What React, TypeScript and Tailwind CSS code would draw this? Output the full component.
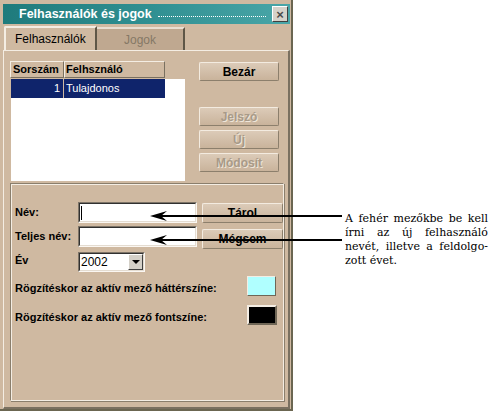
import React from "react";

const ui = "font-['Liberation_Sans',Arial,sans-serif]";

function Btn({ label, disabled, className = "" }: { label: string; disabled?: boolean; className?: string }) {
  return (
    <div
      className={`flex items-center justify-center rounded-[2px] border border-t-[#f3ebe0] border-l-[#f3ebe0] border-r-[#8c7f6c] border-b-[#8c7f6c] bg-gradient-to-b from-[#dccbb8] to-[#c9b39b] text-[12px] font-bold ${
        disabled ? "text-[#a89a88] [text-shadow:1px_1px_0_#efe6da]" : "text-black"
      } ${className}`}
    >
      {label}
    </div>
  );
}

function Sunken({ className = "", children }: { className?: string; children?: React.ReactNode }) {
  return (
    <div className={`border border-t-[#7d7468] border-l-[#7d7468] border-r-[#fbf7f2] border-b-[#fbf7f2] ${className}`}>
      <div className="h-full w-full border border-t-[#303030] border-l-[#303030] border-r-[#e4dcd1] border-b-[#e4dcd1] bg-white">
        {children}
      </div>
    </div>
  );
}

export default function App() {
  return (
    <div className={`relative flex h-[413px] w-[493px] bg-white ${ui}`}>
      {/* Window */}
      <div className="flex h-[411px] w-[293px] flex-col border-r-2 border-b-2 border-[#6b6651] bg-[#cfb9a1] pl-[3px] pt-[4px]">
        {/* Title bar */}
        <div className="flex h-[20px] w-[287px] items-center bg-gradient-to-r from-[#1f7b7c] via-[#2f8f91] to-[#49a6a8] pl-[16px] pr-[2px]">
          <span className="text-[12.5px] font-bold text-white">Felhasználók és jogok</span>
          <div className="mx-[6px] mt-[5px] flex-1 border-t border-dotted border-white" />
          <div className="flex h-[16px] w-[16px] items-center justify-center border border-t-white border-l-white border-r-[#404040] border-b-[#404040] bg-[#d6d2ca] text-[13px] font-bold leading-none text-[#4b4b4b]">
            ×
          </div>
        </div>

        {/* Tabs */}
        <div className="mt-[2px] flex h-[24px] pl-[1px]">
          <div className="flex w-[93px] items-center rounded-tl-[2px] border-t-2 border-l-2 border-r-2 border-t-[#f4ede3] border-l-[#f4ede3] border-r-[#5e5646] bg-[#cfb9a1] pl-[9px] text-[12px] text-black">
            Felhasználók
          </div>
          <div className="mt-[1px] flex w-[88px] items-center justify-center border-t-2 border-r-2 border-t-[#e9dfd2] border-r-[#5e5646] bg-[#bfa890] text-[12px] text-[#857866]">
            Jogok
          </div>
        </div>

        {/* Panel */}
        <div className="flex w-[287px] flex-1 flex-col border-t border-l border-r-2 border-b-2 border-t-[#f4ede3] border-l-[#f4ede3] border-r-[#7a7060] border-b-[#7a7060] pl-[6px] pt-[10px]">
          {/* Upper */}
          <div className="flex h-[122px]">
            <div className="flex w-[175px] flex-col">
              <div className="flex h-[17px] text-[11px] font-bold text-black">
                <div className="flex w-[54px] items-center border border-t-[#f4ede3] border-l-[#f4ede3] border-r-[#7a7060] border-b-[#7a7060] pl-[2px]">
                  Sorszám
                </div>
                <div className="flex w-[101px] items-center border border-t-[#f4ede3] border-l-[#f4ede3] border-r-[#7a7060] border-b-[#7a7060] pl-[1px]">
                  Felhsználó
                </div>
              </div>
              <div className="ml-[1px] mt-[1px] h-[102px] w-[174px] bg-white">
                <div className="flex h-[19px] w-[154px] bg-[#0f246b] text-[11px] text-white">
                  <div className="flex w-[53px] items-center justify-end border-r border-[#cfb9a1] pr-[3px]">1</div>
                  <div className="flex items-center pl-[2px]">Tulajdonos</div>
                </div>
              </div>
            </div>
            <div className="ml-[14px] flex flex-col">
              <Btn label="Bezár" className="mt-[1px] h-[19px] w-[80px]" />
              <Btn label="Jelszó" disabled className="mt-[26px] h-[19px] w-[80px]" />
              <Btn label="Új" disabled className="mt-[4px] h-[19px] w-[80px]" />
              <Btn label="Módosít" disabled className="mt-[4px] h-[19px] w-[80px]" />
            </div>
          </div>

          {/* Lower group */}
          <div className="mb-[6px] mr-[4px] flex flex-1 flex-col border-t border-l border-r border-b border-t-[#8a7e6c] border-l-[#8a7e6c] border-r-[#f4ede3] border-b-[#f4ede3] shadow-[inset_1px_1px_0_#f4ede3,1px_1px_0_#8a7e6c] pl-[4px] pt-[18px] text-[11px] font-bold text-black">
            <div className="flex h-[22px] items-start">
              <div className="flex h-[21px] w-[63px] items-center">Név:</div>
              <Sunken className="h-[21px] w-[119px]">
                <div className="ml-[1px] mt-[2px] h-[14px] w-px bg-black" />
              </Sunken>
              <Btn label="Tárol" className="ml-[5px] mt-[1px] h-[20px] w-[81px]" />
            </div>
            <div className="mt-[2px] flex h-[24px] items-start">
              <div className="flex h-[21px] w-[63px] items-center">Teljes név:</div>
              <Sunken className="h-[21px] w-[119px]" />
              <Btn label="Mégsem" className="ml-[5px] mt-[3px] h-[20px] w-[81px]" />
            </div>
            <div className="mt-[2px] flex h-[20px] items-center">
              <div className="w-[63px] -translate-y-[2px]">Év</div>
              <Sunken className="h-[20px] w-[67px]">
                <div className="flex h-full items-center justify-between font-normal">
                  <span className="pl-[1px] text-[12px]">2002</span>
                  <div className="flex h-full w-[15px] items-center justify-center border border-t-white border-l-white border-r-[#404040] border-b-[#404040] bg-[#d4d0c8]">
                    <div className="h-0 w-0 border-x-[4px] border-t-[4px] border-x-transparent border-t-black" />
                  </div>
                </div>
              </Sunken>
            </div>
            <div className="mt-[4px] flex h-[20px] items-center">
              <div className="w-[232px] translate-y-[2px]">Rögzítéskor az aktív mező háttérszíne:</div>
              <div className="h-[20px] w-[29px] border border-t-[#f4ede3] border-l-[#f4ede3] border-r-[#6f6656] border-b-[#6f6656] bg-[#b0ffff]" />
            </div>
            <div className="mt-[9px] flex h-[20px] items-center">
              <div className="w-[232px] translate-y-[2px]">Rögzítéskor az aktív mező fontszíne:</div>
              <div className="h-[20px] w-[30px] border-2 border-t-[#f4ede3] border-l-[#f4ede3] border-r-[#6f6656] border-b-[#6f6656] bg-black" />
            </div>
          </div>
        </div>
      </div>

      {/* Annotation */}
      <div className="ml-[52px] mt-[212px] w-[143px] font-['DejaVu_Serif','Liberation_Serif',serif] text-[11px] leading-[14px] text-black">
        <div className="text-justify [text-align-last:justify]">A fehér mezőkbe be kell</div>
        <div className="text-justify [text-align-last:justify]">írni az új felhasználó</div>
        <div className="text-justify [text-align-last:justify]">nevét, illetve a feldolgo-</div>
        <div>zott évet.</div>
      </div>

      {/* Arrows */}
      <svg className="pointer-events-none absolute left-0 top-0" width="493" height="413">
        {[216, 240].map((y) => (
          <g key={y}>
            <line x1="156" y1={y} x2="342" y2={y} stroke="black" strokeWidth="2" />
            <path d={`M150 ${y} L167 ${y - 5} L161 ${y} L167 ${y + 5} Z`} fill="black" />
          </g>
        ))}
      </svg>
    </div>
  );
}
